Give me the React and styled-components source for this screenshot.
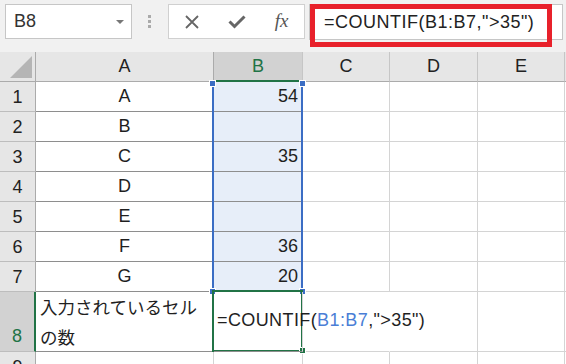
import React from "react";
import styled, { createGlobalStyle } from "styled-components";

const GlobalStyle = createGlobalStyle`
  html, body {
    margin: 0;
    padding: 0;
    background: #fff;
  }
  body {
    font-family: "Liberation Sans", "Noto Sans CJK JP", sans-serif;
    color: #1f1f1f;
  }
  * {
    box-sizing: border-box;
  }
`;

const GREEN = "#217346";
const BLUE = "#3b6dc4";

const rows = [
  { n: 1, a: "A", b: "54" },
  { n: 2, a: "B", b: "" },
  { n: 3, a: "C", b: "35" },
  { n: 4, a: "D", b: "" },
  { n: 5, a: "E", b: "" },
  { n: 6, a: "F", b: "36" },
  { n: 7, a: "G", b: "20" },
];

const Page = styled.div`
  width: 566px;
  height: 364px;
  overflow: hidden;
  background: #fff;
`;

const FormulaBar = styled.div`
  display: flex;
  align-items: flex-start;
  height: 52px;
  padding: 4px 3px 0 5px;
  background: #f1f1f1;
`;

const NameBox = styled.div`
  width: 127px;
  height: 35px;
  display: flex;
  align-items: center;
  justify-content: space-between;
  padding: 0 7px 0 8px;
  background: #fff;
  border: 1px solid #c6c6c6;
  font-size: 18px;
  color: #333;
`;

const Caret = styled.span`
  width: 0;
  height: 0;
  border-left: 4px solid transparent;
  border-right: 4px solid transparent;
  border-top: 4px solid #777;
`;

const Grip = styled.div`
  display: flex;
  flex-direction: column;
  gap: 2px;
  margin: 11px 0 0 16px;
`;

const GripDot = styled.span`
  width: 3px;
  height: 3px;
  background: #aaa;
`;

const ButtonGroup = styled.div`
  display: flex;
  width: 137px;
  height: 35px;
  margin-left: 17px;
  background: #fff;
  border: 1px solid #d0d0d0;
`;

const IconButton = styled.div`
  width: 45px;
  display: flex;
  align-items: center;
  justify-content: center;
  color: #666;
`;

const Fx = styled(IconButton)`
  font-family: "Liberation Serif", "DejaVu Serif", serif;
  font-style: italic;
  font-size: 19px;
  color: #555;
  padding-bottom: 2px;
`;

const FormulaInput = styled.div`
  position: relative;
  flex: 1;
  height: 36px;
  margin-left: 4px;
  display: flex;
  align-items: center;
  padding-left: 14px;
  background: #fff;
  border: 1px solid #c6c6c6;
  font-size: 18px;
  letter-spacing: 0.5px;
  color: #222;
  white-space: nowrap;
`;

const RedMark = styled.div`
  position: absolute;
  left: 0;
  top: -1px;
  width: 242px;
  height: 43px;
  border: 5px solid #e8212b;
`;

const Sheet = styled.div`
  display: grid;
  grid-template-columns: 36px 178px 89px 87px 88px 87px 1fr;
  grid-template-rows: repeat(8, 30px) 60px 30px;
  background: #fff;
  font-size: 18px;
`;

const Placed = styled.div`
  grid-row: ${(p) => p.$r};
  grid-column: ${(p) => p.$c};
`;

const Corner = styled(Placed)`
  position: relative;
  background: #e6e6e6;
  border-right: 1px solid #ababab;
  border-bottom: 1px solid #ababab;

  &::after {
    content: "";
    position: absolute;
    right: 3px;
    bottom: 3px;
    width: 0;
    height: 0;
    border-left: 22px solid transparent;
    border-bottom: 22px solid #b5b5b5;
  }
`;

const ColHead = styled(Placed)`
  display: flex;
  align-items: center;
  justify-content: center;
  background: ${(p) => (p.$active ? "#d2d2d2" : "#e6e6e6")};
  color: ${(p) => (p.$active ? GREEN : "#222")};
  border-right: 1px solid ${(p) => (p.$first ? "#ababab" : "#c6c6c6")};
  border-bottom: ${(p) => (p.$active ? `2px solid ${GREEN}` : "1px solid #ababab")};
`;

const RowHead = styled(Placed)`
  display: flex;
  align-items: ${(p) => (p.$active ? "flex-end" : "center")};
  justify-content: center;
  line-height: 30px;
  background: ${(p) => (p.$active ? "#d2d2d2" : "#e6e6e6")};
  color: ${(p) => (p.$active ? GREEN : "#222")};
  border-right: ${(p) => (p.$active ? `2px solid ${GREEN}` : "1px solid #ababab")};
  border-bottom: 1px solid #bdbdbd;
`;

const Cell = styled(Placed)`
  display: flex;
  align-items: center;
  justify-content: ${(p) => p.$align || "flex-start"};
  padding: 0 4px;
  white-space: nowrap;
  background: ${(p) => (p.$ref ? "#e7eef9" : "transparent")};
  border-right: 1px solid ${(p) => (p.$noRight ? "transparent" : "#d4d4d4")};
  border-bottom: 1px solid ${(p) => (p.$dark ? "#8e8e8e" : "#d4d4d4")};
`;

const WrapCell = styled(Cell)`
  display: block;
  padding: 0 4px;
  font-family: "Noto Sans CJK JP", sans-serif;
  font-size: 17.5px;
  line-height: 30px;
  white-space: normal;
`;

const EditCell = styled(Cell)`
  position: relative;
  z-index: 1;
  font-size: 18px;
  letter-spacing: 0.4px;
  padding: 0 0 2px 3px;
`;

const RefText = styled.span`
  color: #4a7ed6;
`;

const Cursor = styled.span`
  display: inline-block;
  width: 1px;
  height: 25px;
  margin-left: 3px;
  background: #111;
`;

const RefBox = styled(Placed)`
  position: relative;
  margin-left: -2px;
  border-left: 2px solid ${BLUE};
  border-right: 2px solid ${BLUE};
  pointer-events: none;
`;

const ActiveBox = styled(Placed)`
  position: relative;
  margin: -2px 0 0 -2px;
  border: 2px solid ${GREEN};
  pointer-events: none;
`;

const Handle = styled.span`
  position: absolute;
  width: 5px;
  height: 5px;
  background: ${(p) => p.$color};
  outline: 1px solid #fff;
  ${(p) => p.$pos}
`;

function CrossIcon() {
  return (
    <svg width="16" height="14" viewBox="0 0 16 14">
      <path d="M2 1 L14 13 M14 1 L2 13" stroke="#666" strokeWidth="1.8" fill="none" />
    </svg>
  );
}

function CheckIcon() {
  return (
    <svg width="18" height="14" viewBox="0 0 18 14">
      <path d="M1.5 6.5 L6.5 11.5 L16.5 1.5" stroke="#666" strokeWidth="3" fill="none" />
    </svg>
  );
}

const cols = ["A", "B", "C", "D", "E"];

export default function App() {
  return (
    <Page>
      <GlobalStyle />
      <FormulaBar>
        <NameBox>
          <span>B8</span>
          <Caret />
        </NameBox>
        <Grip>
          <GripDot />
          <GripDot />
          <GripDot />
        </Grip>
        <ButtonGroup>
          <IconButton>
            <CrossIcon />
          </IconButton>
          <IconButton>
            <CheckIcon />
          </IconButton>
          <Fx>fx</Fx>
        </ButtonGroup>
        <FormulaInput>
          =COUNTIF(B1:B7,"&gt;35")
          <RedMark />
        </FormulaInput>
      </FormulaBar>

      <Sheet>
        <Corner $r={1} $c={1} />
        {cols.map((c, i) => (
          <ColHead key={c} $r={1} $c={i + 2} $active={c === "B"} $first={c === "A"}>
            {c}
          </ColHead>
        ))}
        <ColHead $r={1} $c={7} />

        {rows.map((row) => (
          <React.Fragment key={row.n}>
            <RowHead $r={row.n + 1} $c={1}>{row.n}</RowHead>
            <Cell $r={row.n + 1} $c={2} $align="center" $dark>
              {row.a}
            </Cell>
            <Cell $r={row.n + 1} $c={3} $align="flex-end" $dark $ref>
              {row.b}
            </Cell>
            <Cell $r={row.n + 1} $c={4} />
            <Cell $r={row.n + 1} $c={5} />
            <Cell $r={row.n + 1} $c={6} />
            <Cell $r={row.n + 1} $c={7} />
          </React.Fragment>
        ))}

        <RowHead $r={9} $c={1} $active>8</RowHead>
        <WrapCell $r={9} $c={2} $dark>
          入力されているセル
          <br />
          の数
        </WrapCell>
        <EditCell $r={9} $c={3} $dark>
          =COUNTIF(<RefText>B1:B7</RefText>,"&gt;35")
          <Cursor />
        </EditCell>
        <Cell $r={9} $c={4} $noRight />
        <Cell $r={9} $c={5} />
        <Cell $r={9} $c={6} />
        <Cell $r={9} $c={7} />

        <RowHead $r={10} $c={1}>9</RowHead>
        <Cell $r={10} $c={2} />
        <Cell $r={10} $c={3} />
        <Cell $r={10} $c={4} />
        <Cell $r={10} $c={5} />
        <Cell $r={10} $c={6} />
        <Cell $r={10} $c={7} />

        <RefBox $r="2 / 9" $c={3}>
          <Handle $color={BLUE} $pos="left: -4px; top: -1px;" />
          <Handle $color={BLUE} $pos="right: -4px; top: -1px;" />
          <Handle $color={BLUE} $pos="left: -4px; bottom: -2px;" />
          <Handle $color={BLUE} $pos="right: -4px; bottom: -2px;" />
        </RefBox>
        <ActiveBox $r={9} $c={3}>
          <Handle $color={GREEN} $pos="right: -4px; bottom: -3px;" />
        </ActiveBox>
      </Sheet>
    </Page>
  );
}
